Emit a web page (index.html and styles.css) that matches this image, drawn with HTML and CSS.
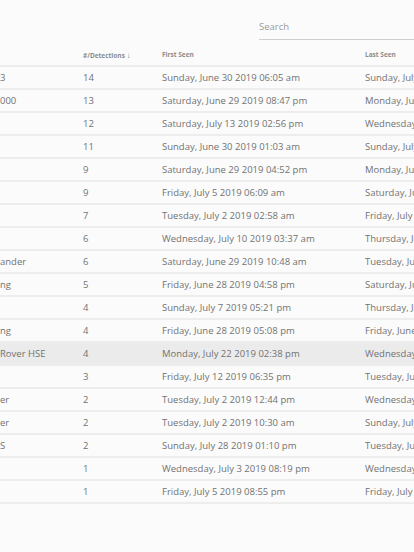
FILE: index.html
```html
<!DOCTYPE html>
<html lang="en">
<head>
<meta charset="utf-8">
<title>Detections</title>
<link rel="stylesheet" href="styles.css">
</head>
<body>
<div class="page">
  <div class="toolbar">
    <div class="search">Search</div>
  </div>
  <div class="table">
    <div class="row head">
      <div class="c1"></div>
      <div class="c2">#/Detections <span class="arrow">&#8595;</span></div>
      <div class="c3">First Seen</div>
      <div class="c4">Last Seen</div>
    </div>
    <div class="row"><div class="c1">3</div><div class="c2">14</div><div class="c3">Sunday, June 30 2019 06:05 am</div><div class="c4">Sunday, July</div></div>
    <div class="row"><div class="c1">000</div><div class="c2">13</div><div class="c3">Saturday, June 29 2019 08:47 pm</div><div class="c4">Monday, July</div></div>
    <div class="row"><div class="c1"></div><div class="c2">12</div><div class="c3">Saturday, July 13 2019 02:56 pm</div><div class="c4">Wednesday, July</div></div>
    <div class="row"><div class="c1"></div><div class="c2">11</div><div class="c3">Sunday, June 30 2019 01:03 am</div><div class="c4">Sunday, July</div></div>
    <div class="row"><div class="c1"></div><div class="c2">9</div><div class="c3">Saturday, June 29 2019 04:52 pm</div><div class="c4">Monday, July</div></div>
    <div class="row"><div class="c1"></div><div class="c2">9</div><div class="c3">Friday, July 5 2019 06:09 am</div><div class="c4">Saturday, July</div></div>
    <div class="row"><div class="c1"></div><div class="c2">7</div><div class="c3">Tuesday, July 2 2019 02:58 am</div><div class="c4">Friday, July</div></div>
    <div class="row"><div class="c1"></div><div class="c2">6</div><div class="c3">Wednesday, July 10 2019 03:37 am</div><div class="c4">Thursday, July</div></div>
    <div class="row"><div class="c1">ander</div><div class="c2">6</div><div class="c3">Saturday, June 29 2019 10:48 am</div><div class="c4">Tuesday, July</div></div>
    <div class="row"><div class="c1">ng</div><div class="c2">5</div><div class="c3">Friday, June 28 2019 04:58 pm</div><div class="c4">Saturday, July</div></div>
    <div class="row"><div class="c1"></div><div class="c2">4</div><div class="c3">Sunday, July 7 2019 05:21 pm</div><div class="c4">Thursday, July</div></div>
    <div class="row"><div class="c1">ng</div><div class="c2">4</div><div class="c3">Friday, June 28 2019 05:08 pm</div><div class="c4">Friday, June</div></div>
    <div class="row active"><div class="c1">Rover HSE</div><div class="c2">4</div><div class="c3">Monday, July 22 2019 02:38 pm</div><div class="c4">Wednesday, July</div></div>
    <div class="row"><div class="c1"></div><div class="c2">3</div><div class="c3">Friday, July 12 2019 06:35 pm</div><div class="c4">Tuesday, July</div></div>
    <div class="row"><div class="c1">er</div><div class="c2">2</div><div class="c3">Tuesday, July 2 2019 12:44 pm</div><div class="c4">Wednesday, July</div></div>
    <div class="row"><div class="c1">er</div><div class="c2">2</div><div class="c3">Tuesday, July 2 2019 10:30 am</div><div class="c4">Sunday, July</div></div>
    <div class="row"><div class="c1">S</div><div class="c2">2</div><div class="c3">Sunday, July 28 2019 01:10 pm</div><div class="c4">Tuesday, July</div></div>
    <div class="row"><div class="c1"></div><div class="c2">1</div><div class="c3">Wednesday, July 3 2019 08:19 pm</div><div class="c4">Wednesday, July</div></div>
    <div class="row"><div class="c1"></div><div class="c2">1</div><div class="c3">Friday, July 5 2019 08:55 pm</div><div class="c4">Friday, July</div></div>
  </div>
</div>
</body>
</html>
```

FILE: styles.css
```css
html, body {
  margin: 0;
  padding: 0;
  background: #fbfbfb;
  overflow: hidden;
}
body {
  width: 414px;
  height: 552px;
  font-family: "Open Sans", "Liberation Sans", sans-serif;
  color: #727272;
}
.page {
  width: 414px;
  overflow: hidden;
}
.toolbar {
  display: flex;
  justify-content: flex-end;
  padding-top: 18px;
  height: 24px;
}
.search {
  width: 155px;
  height: 22px;
  box-sizing: border-box;
  border-bottom: 1px solid #cfcfcf;
  font-size: 9.5px;
  color: #9a9a9a;
  padding-top: 2px;
}
.table {
  margin-top: 2px;
}
.row {
  display: flex;
  height: 23px;
  align-items: center;
  border-bottom: 2px solid #ededed;
  box-sizing: border-box;
  font-size: 9.5px;
  white-space: nowrap;
}
.row.head {
  height: 23px;
  font-size: 6.5px;
  font-weight: 700;
  color: #8c8c8c;
}
.arrow {
  font-size: 8px;
  font-weight: 400;
}
.row.active {
  background: #ebebeb;
}
.c1 { width: 83px; flex: none; overflow: hidden; }
.c2 { width: 79px; flex: none; }
.c3 { width: 203px; flex: none; }
.c4 { flex: none; width: 200px; }
```
